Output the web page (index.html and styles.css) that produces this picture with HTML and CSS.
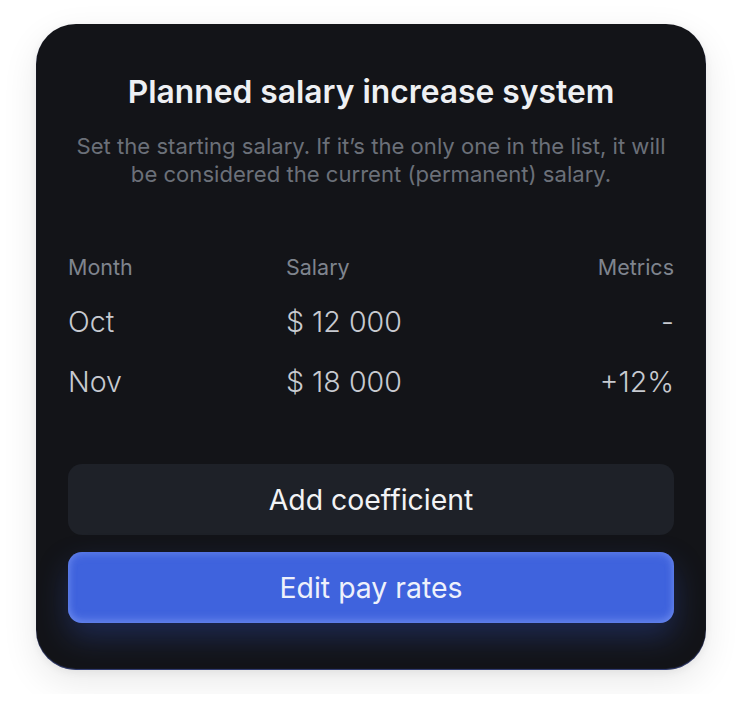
FILE: index.html
```html
<!DOCTYPE html>
<html lang="en">
<head>
<meta charset="utf-8">
<title>Planned salary increase system</title>
<link rel="stylesheet" href="styles.css">
</head>
<body>
<div class="card">
  <h1 class="title">Planned salary increase system</h1>
  <p class="subtitle">Set the starting salary. If it’s the only one in the list, it will be considered the current (permanent) salary.</p>
  <div class="table">
    <div class="row head">
      <span>Month</span><span>Salary</span><span class="right">Metrics</span>
    </div>
    <div class="row">
      <span>Oct</span><span>$ 12 000</span><span class="right">-</span>
    </div>
    <div class="row">
      <span>Nov</span><span>$ 18 000</span><span class="right">+12%</span>
    </div>
  </div>
  <div class="actions">
    <button class="btn btn-dark">Add coefficient</button>
    <button class="btn btn-blue">Edit pay rates</button>
  </div>
</div>
</body>
</html>
```
FILE: styles.css
```css
* { box-sizing: border-box; }
html, body { margin: 0; background: #ffffff; }
body {
  padding: 24px 36px;
  font-family: Inter, "Noto Sans", sans-serif;
}
.card {
  width: 670px;
  height: 646px;
  background: #131418;
  border-radius: 40px;
  padding: 50px 32px 47px;
  box-shadow: 0 12px 36px rgba(0,0,0,0.09), 0 2px 8px rgba(0,0,0,0.06), inset 0 -1px 1px rgba(80,100,200,0.55);
  display: flex;
  flex-direction: column;
}
.title {
  margin: 0;
  text-align: center;
  font-size: 31.8px;
  line-height: 36px;
  font-weight: 600;
  color: #eef0f3;
}
.subtitle {
  margin: 22px auto 0;
  max-width: 606px;
  text-align: center;
  font-size: 22.1px;
  line-height: 28px;
  color: #6b7079;
}
.table {
  margin-top: 66px;
  display: flex;
  flex-direction: column;
}
.row {
  display: grid;
  grid-template-columns: 218px 1fr 1fr;
  align-items: center;
  height: 60px;
  font-size: 28.6px;
  font-weight: 300;
  color: #c7cad0;
}
.row.head {
  height: 24px;
  margin-bottom: 13px;
  font-size: 21.5px;
  font-weight: 400;
  color: #7f848e;
}
.right { text-align: right; }
.actions {
  margin-top: 53px;
  display: flex;
  flex-direction: column;
  gap: 17px;
}
.btn {
  height: 71px;
  border: none;
  border-radius: 14px;
  font-family: inherit;
  font-size: 28.4px;
  font-weight: 400;
  cursor: pointer;
}
.btn-dark {
  background: #1e2128;
  color: #f2f3f5;
}
.btn-blue {
  background: #3f63dd;
  color: #eef1fb;
  box-shadow: inset 0 -3px 8px rgba(150,175,255,0.45), inset 0 3px 8px rgba(150,175,255,0.25), 0 14px 30px rgba(50,80,190,0.35);
}
```
